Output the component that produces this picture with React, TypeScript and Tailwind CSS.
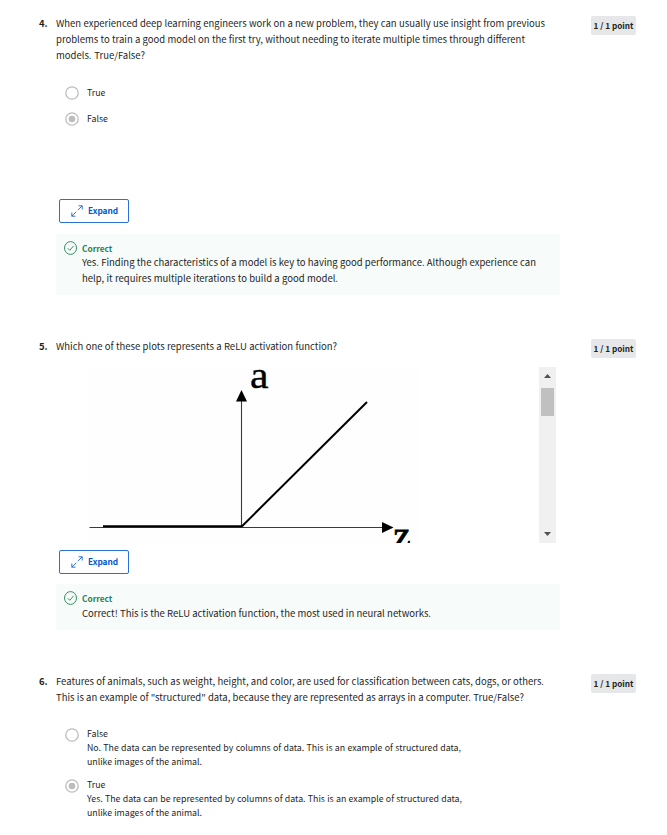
import type { ReactNode } from "react";

function Line({ w, children }: { w: string; children: ReactNode }) {
  return <div className={`h-4 whitespace-nowrap leading-4 [text-align-last:justify] ${w}`}>{children}</div>;
}

function Question({ n, children }: { n: string; children: ReactNode }) {
  return (
    <div className="flex items-start text-[9.5px] text-[#1f1f1f]">
      <div className="ml-[39px] w-[17px] shrink-0 font-bold leading-[15px]">{n}</div>
      <div className="-mt-px w-[535px] shrink-0">{children}</div>
      <div className="flex h-[19px] w-[45px] shrink-0 items-center justify-center whitespace-nowrap rounded-[2px] bg-[#e5e7e8] pb-px text-[8.2px] font-bold">
        1 / 1 point
      </div>
    </div>
  );
}

function Radio({ checked }: { checked?: boolean }) {
  return (
    <svg className="block shrink-0" width="14" height="14" viewBox="0 0 14 14">
      <circle cx="7" cy="7" r="6.200" fill="#fff" stroke="#bdbdbd" strokeWidth="1.300" />
      {checked && <circle cx="7" cy="7" r="3.300" fill="#bdbdbd" />}
    </svg>
  );
}

function Option({ label, checked, children }: { label: string; checked?: boolean; children?: ReactNode }) {
  return (
    <div className="ml-[65px] flex gap-2 text-[8.8px] leading-[14px] text-[#1f1f1f]">
      <div className={children ? "pt-px" : ""}>
        <Radio checked={checked} />
      </div>
      <div className="whitespace-nowrap">
        <div>{label}</div>
        {children}
      </div>
    </div>
  );
}

function ExpandButton() {
  return (
    <button className="ml-[59px] flex h-6 w-[70px] items-center rounded-[2px] border border-[#2a6fdb] pl-[11px] text-[#0056d2]">
      <svg width="12" height="12" viewBox="0 0 12 12" fill="none" stroke="currentColor" strokeWidth="0.8">
        <path d="M7.5 .8h3.7v3.7M11.2.8 6.8 5.2M4.5 11.2H.8V7.5M.8 11.2l4.4-4.4" />
      </svg>
      <span className="ml-[5px] pb-0.5 text-[8.3px] font-bold leading-none">Expand</span>
    </button>
  );
}

function Feedback({ children, className }: { children: ReactNode; className: string }) {
  return (
    <div className={`ml-14 flex w-[504px] bg-[#f7fbf9] pl-2 pt-[7px] ${className}`}>
      <svg className="shrink-0" width="13" height="14" viewBox="0 0 13 14" fill="none" stroke="#1f8354" strokeWidth="0.9">
        <ellipse cx="6.5" cy="7" rx="6" ry="6.4" />
        <path d="m3.8 7.3 2 2 3.7-4.4" />
      </svg>
      <div className="ml-[5px] text-[9.5px] text-[#1f1f1f]">
        <div className="text-[8.3px] font-bold leading-[14px] text-[#1f8354]">Correct</div>
        {children}
      </div>
    </div>
  );
}

function Plot() {
  return (
    <svg width="483" height="176" viewBox="56 367 483 176" className="shrink-0">
      <rect x="87" y="367" width="333" height="176" fill="#fefefe" />
      <path d="M241.5 400V527M89.5 527.5H384" stroke="#3a3a3a" strokeWidth="1.1" />
      <path d="M103 526.2H242L367 402" stroke="#000" strokeWidth="2" fill="none" />
      <path d="M241.5 390l5.5 11.5h-11zM393.500 527.500l-11.500-5.500v11z" fill="#000" />
      <text x="250" y="387.500" fontSize="38" fontFamily="'Liberation Serif', serif" textLength="18.500" lengthAdjust="spacingAndGlyphs" stroke="#000" strokeWidth="0.400">a</text>
      <text x="393.500" y="547" fontSize="36" fontFamily="'Liberation Serif', serif" textLength="17" lengthAdjust="spacingAndGlyphs" stroke="#000" strokeWidth="0.900">z</text>
    </svg>
  );
}

function Scrollbar() {
  return (
    <div className="flex h-[176px] w-[17px] flex-col items-center bg-[#f0f0f0]">
      <svg width="17" height="21" viewBox="0 0 17 21"><path d="M5 11h7L8.500 7z" fill="#505050" /></svg>
      <div className="h-7 w-[13px] bg-[#c0c0c0]" />
      <svg className="mt-auto" width="17" height="17" viewBox="0 0 17 17"><path d="M5 6h7l-3.500 4z" fill="#505050" /></svg>
    </div>
  );
}

export default function App() {
  return (
    <main className="h-[835px] w-[667px] overflow-hidden bg-white pt-4 font-['Noto_Sans_CJK_SC','Noto_Sans',sans-serif]">
      <section className="h-[323px]">
        <Question n="4.">
          <Line w="w-[489px]">When experienced deep learning engineers work on a new problem, they can usually use insight from previous</Line>
          <Line w="w-[469px]">problems to train a good model on the first try, without needing to iterate multiple times through different</Line>
          <Line w="w-[89px]">models. True/False?</Line>
        </Question>
        <div className="flex flex-col gap-3 pb-[73px] pt-[23px]">
          <Option label="True" />
          <Option label="False" checked />
        </div>
        <ExpandButton />
        <div className="h-[11px]" />
        <Feedback className="h-[61px]">
          <div className="-mt-px">
            <Line w="w-[454px]">Yes. Finding the characteristics of a model is key to having good performance. Although experience can</Line>
            <Line w="w-[256px]">help, it requires multiple iterations to build a good model.</Line>
          </div>
        </Feedback>
      </section>
      <section className="h-[335px]">
        <Question n="5.">
          <Line w="w-[281px]">Which one of these plots represents a ReLU activation function?</Line>
        </Question>
        <div className="ml-14 mt-[9px] flex">
          <Plot />
          <Scrollbar />
        </div>
        <div className="h-[7px]" />
        <ExpandButton />
        <div className="h-[10px]" />
        <Feedback className="h-[46px]">
          <Line w="w-[349px]">Correct! This is the ReLU activation function, the most used in neural networks.</Line>
        </Feedback>
      </section>
      <section>
        <Question n="6.">
          <Line w="w-[488px]">Features of animals, such as weight, height, and color, are used for classification between cats, dogs, or others.</Line>
          <Line w="w-[468px]">This is an example of "structured" data, because they are represented as arrays in a computer. True/False?</Line>
        </Question>
        <div className="flex flex-col gap-[9px] pt-[22px]">
          <Option label="False">
            <div className="w-[374px] [text-align-last:justify]">No. The data can be represented by columns of data. This is an example of structured data,</div>
            <div className="w-[115px] [text-align-last:justify]">unlike images of the animal.</div>
          </Option>
          <Option label="True" checked>
            <div className="w-[375px] [text-align-last:justify]">Yes. The data can be represented by columns of data. This is an example of structured data,</div>
            <div className="w-[115px] [text-align-last:justify]">unlike images of the animal.</div>
          </Option>
        </div>
      </section>
    </main>
  );
}
